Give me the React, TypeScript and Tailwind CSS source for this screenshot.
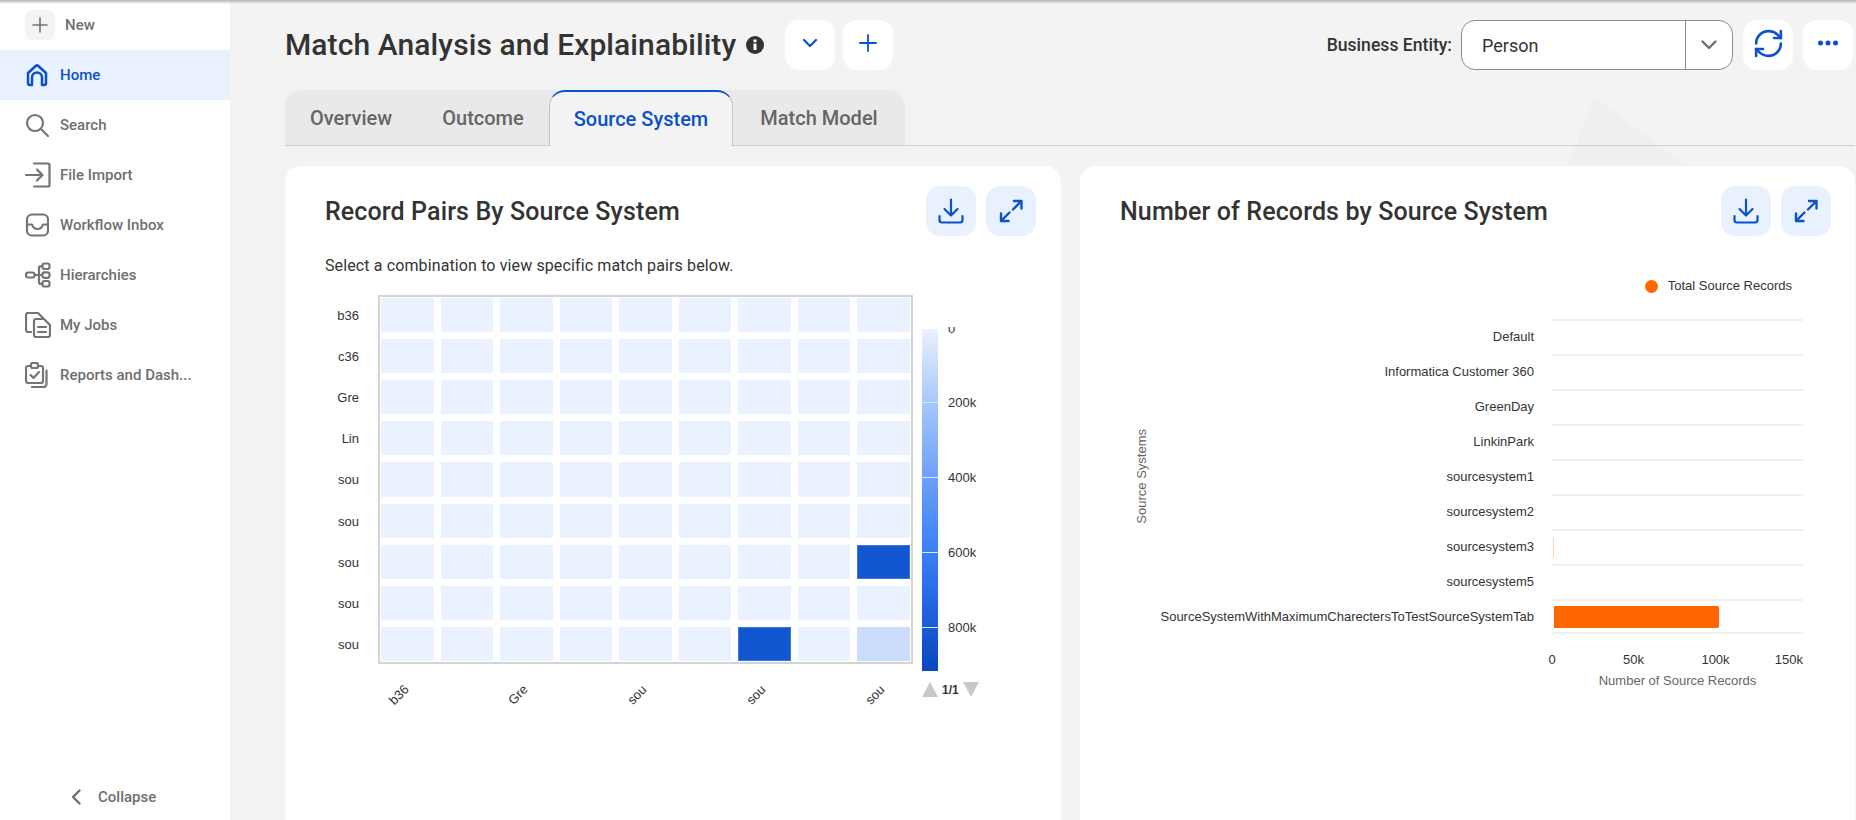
import React from "react";
import { RefreshCw } from "lucide-react";

const BLUE = "#0b51c9";

const HomeIcon = () => (
  <svg width="24" height="24" viewBox="0 0 24 24" fill="none" stroke={BLUE} strokeWidth="2.500" strokeLinejoin="round" strokeLinecap="round">
    <path d="M3 10 11 2.800a1.500 1.500 0 0 1 2 0L21 10v10a2 2 0 0 1-2 2h-2v-7.500a5 5 0 0 0-10 0V22H5a2 2 0 0 1-2-2z" />
  </svg>
);
const SearchIcon = () => (
  <svg width="24" height="24" viewBox="0 0 24 24" fill="none" stroke="#747474" strokeWidth="2.200" strokeLinecap="round">
    <circle cx="10" cy="10" r="8" />
    <path d="m16 16 7 7" />
  </svg>
);
const ImportIcon = () => (
  <svg width="26" height="26" viewBox="0 0 26 26" fill="none" stroke="#747474" strokeWidth="2.200" strokeLinecap="round" strokeLinejoin="round">
    <path d="M9 1.500h14a1.500 1.500 0 0 1 1.500 1.500v20a1.500 1.500 0 0 1-1.500 1.500H9" />
    <path d="M1 13h16.500M12 7.500 17.500 13 12 18.500" />
  </svg>
);
const InboxIcon = () => (
  <svg width="24" height="24" viewBox="0 0 24 24" fill="none" stroke="#747474" strokeWidth="2.200" strokeLinecap="round" strokeLinejoin="round">
    <rect x="2" y="1.500" width="21" height="21" rx="5" />
    <path d="M2 11.500h5c1 3 3 4.500 5.500 4.500s4.500-1.500 5.500-4.500h5" />
  </svg>
);
const HierarchyIcon = () => (
  <svg width="26" height="26" viewBox="0 0 26 26" fill="none" stroke="#747474" strokeWidth="2.200" strokeLinejoin="round">
    <rect x="1" y="10.500" width="8.500" height="5" rx="2" />
    <rect x="17.500" y="1.500" width="7" height="5.500" rx="2" />
    <rect x="17.500" y="10.300" width="7" height="5.500" rx="2" />
    <rect x="17.500" y="19" width="7" height="5.500" rx="2" />
    <path d="M9.500 13h8M14 4.300v17.500M14 4.300h3.500M14 21.800h3.500" />
  </svg>
);
const JobsIcon = () => (
  <svg width="26" height="26" viewBox="0 0 26 26" fill="none" stroke="#747474" strokeWidth="2.200" strokeLinecap="round" strokeLinejoin="round">
    <path d="M6 20H3a2 2 0 0 1-2-2V3a2 2 0 0 1 2-2h10l5 5" />
    <path d="M9 9a2 2 0 0 1 2-2h8l6 6v10a2 2 0 0 1-2 2H11a2 2 0 0 1-2-2z" />
    <path d="M13 15h8M13 20h8" />
  </svg>
);
const ReportsIcon = () => (
  <svg width="24" height="26" viewBox="0 0 24 26" fill="none" stroke="#747474" strokeWidth="2.200" strokeLinecap="round" strokeLinejoin="round">
    <path d="M6 4H3a2 2 0 0 0-2 2v13a2 2 0 0 0 2 2h13a2 2 0 0 0 2-2V6a2 2 0 0 0-2-2h-3" />
    <rect x="6" y="1" width="7" height="5" rx="1.500" />
    <path d="m5.500 13 3 3 5.500-6" />
    <path d="M21.500 8.500V22a3 3 0 0 1-3 3H7" />
  </svg>
);
const DownloadIcon = () => (
  <svg width="26" height="26" viewBox="0 0 26 26" fill="none" stroke={BLUE} strokeWidth="2.200" strokeLinecap="round" strokeLinejoin="round">
    <path d="M13 1.500V17M6.500 11l6.500 6.500 6.500-6.500" />
    <path d="M1.500 18v4a2.500 2.500 0 0 0 2.500 2.500h18a2.500 2.500 0 0 0 2.500-2.500v-4" />
  </svg>
);
const ExpandIcon = () => (
  <svg width="24" height="24" viewBox="0 0 24 24" fill="none" stroke={BLUE} strokeWidth="2.400" strokeLinecap="round" strokeLinejoin="round">
    <path d="M15 2h7.500v7.500M22.500 2 14 10.500" />
    <path d="M2 14.500V22h7.500M2 22l8.500-8.500" />
  </svg>
);

const navItems: { label: string; icon: React.ReactNode; active?: boolean }[] = [
  { label: "Home", icon: <HomeIcon />, active: true },
  { label: "Search", icon: <SearchIcon /> },
  { label: "File Import", icon: <ImportIcon /> },
  { label: "Workflow Inbox", icon: <InboxIcon /> },
  { label: "Hierarchies", icon: <HierarchyIcon /> },
  { label: "My Jobs", icon: <JobsIcon /> },
  { label: "Reports and Dash...", icon: <ReportsIcon /> },
];

function Sidebar() {
  return (
    <aside className="w-[230px] shrink-0 h-[820px] bg-white flex flex-col text-[15px] font-medium text-[#6f6f6f]">
      <div className="h-[50px] flex items-center pl-[25px]">
        <div className="w-[30px] h-[30px] rounded-[8px] bg-[#f3f3f3] flex items-center justify-center">
          <svg width="16" height="16" viewBox="0 0 16 16" fill="none" stroke="#747474" strokeWidth="1.600" strokeLinecap="round">
            <path d="M8 1v14M1 8h14" />
          </svg>
        </div>
        <span className="ml-[10px]">New</span>
      </div>
      {navItems.map((n) => (
        <div key={n.label} className={n.active ? "h-[50px] flex items-center bg-[#e9f1fe] text-[#0b51c9]" : "h-[50px] flex items-center"}>
          <div className="w-[60px] pl-[25px] flex items-center">{n.icon}</div>
          <span>{n.label}</span>
        </div>
      ))}
      <div className="mt-auto h-[46px] flex items-center pl-[71px]">
        <svg width="10" height="16" viewBox="0 0 10 16" fill="none" stroke="#6f6f6f" strokeWidth="2.400" strokeLinecap="round" strokeLinejoin="round">
          <path d="M8.500 1.500 2 8l6.500 6.500" />
        </svg>
        <span className="ml-[17px]">Collapse</span>
      </div>
    </aside>
  );
}

function IconBtn({ children, tint }: { children: React.ReactNode; tint?: boolean }) {
  return (
    <button className={tint ? "w-[50px] h-[50px] rounded-[14px] bg-[#e9f1fe] flex items-center justify-center" : "w-[50px] h-[50px] rounded-[14px] bg-white flex items-center justify-center"}>
      {children}
    </button>
  );
}

function Header() {
  return (
    <div className="mt-[20px] h-[50px] flex items-center pr-[2px]">
      <h1 className="text-[30px] leading-[36px] tracking-[0.1px] font-medium text-[#333333]">Match Analysis and Explainability</h1>
      <svg className="ml-[10px]" width="18" height="18" viewBox="0 0 18 18">
        <circle cx="9" cy="9" r="9" fill="#333333" />
        <rect x="7.500" y="7.500" width="3" height="6.500" fill="#ffffff" />
        <rect x="7.500" y="3.500" width="3" height="2.700" fill="#ffffff" />
      </svg>
      <div className="ml-[21px]">
        <IconBtn>
          <svg className="-mt-[4px]" width="16" height="10" viewBox="0 0 16 10" fill="none" stroke={BLUE} strokeWidth="2.200" strokeLinecap="round" strokeLinejoin="round">
            <path d="m2 2 6 6 6-6" />
          </svg>
        </IconBtn>
      </div>
      <div className="ml-[8px]">
        <IconBtn>
          <svg className="-mt-[4px]" width="18" height="18" viewBox="0 0 18 18" fill="none" stroke={BLUE} strokeWidth="1.800" strokeLinecap="round">
            <path d="M9 1v16M1 9h16" />
          </svg>
        </IconBtn>
      </div>
      <div className="ml-auto flex items-center">
        <span className="text-[17.6px] font-medium text-[#333333]">Business Entity:</span>
        <div className="ml-[9px] w-[272px] h-[50px] rounded-[14px] border border-[#8c8c8c] bg-white flex items-center">
          <span className="flex-1 pl-[20px] text-[18px] text-[#333333]">Person</span>
          <div className="w-[47px] h-full border-l border-[#8c8c8c] flex items-center justify-center">
            <svg width="16" height="10" viewBox="0 0 16 10" fill="none" stroke="#6f6f6f" strokeWidth="2.400" strokeLinecap="round" strokeLinejoin="round">
              <path d="m1.500 1.500 6.500 6.500 6.500-6.500" />
            </svg>
          </div>
        </div>
        <div className="ml-[10px]">
          <IconBtn>
            <RefreshCw className="-mt-[3px]" size={33} color={BLUE} strokeWidth={1.900} />
          </IconBtn>
        </div>
        <div className="ml-[10px]">
          <IconBtn>
            <svg className="-mt-[4px]" width="20" height="6" viewBox="0 0 20 6" fill={BLUE}>
              <circle cx="2.500" cy="3" r="2.500" />
              <circle cx="10" cy="3" r="2.500" />
              <circle cx="17.500" cy="3" r="2.500" />
            </svg>
          </IconBtn>
        </div>
      </div>
    </div>
  );
}

function Tabs() {
  return (
    <div className="mt-[20px] h-[56px] border-b border-[#cfcfcf] flex text-[20px] font-medium text-[#666666]">
      <div className="flex bg-[#e9e9e9] rounded-t-[16px]">
        <div className="w-[132px] h-full flex items-center justify-center">Overview</div>
        <div className="w-[132px] h-full flex items-center justify-center">Outcome</div>
        <div className="w-[184px] h-[56px] flex items-center justify-center bg-[#f3f3f3] text-[#0b51c9] rounded-t-[16px] border-t-2 border-x border-t-[#0b51c9] border-x-[#c4c4c4]">
          Source System
        </div>
        <div className="w-[172px] h-full flex items-center justify-center">Match Model</div>
      </div>
      <div className="w-[190px] bg-[#f2f2f2] rounded-tr-[16px]" />
    </div>
  );
}

function CardHead({ title }: { title: string }) {
  return (
    <div className="flex items-center justify-between h-[50px]">
      <h2 className="text-[25px] leading-[32px] tracking-[0.12px] font-medium text-[#333333] mt-[1px]">{title}</h2>
      <div className="flex gap-[10px]">
        <IconBtn tint>
          <DownloadIcon />
        </IconBtn>
        <IconBtn tint>
          <ExpandIcon />
        </IconBtn>
      </div>
    </div>
  );
}

const yLabels = ["b36", "c36", "Gre", "Lin", "sou", "sou", "sou", "sou", "sou"];
const xLabels = ["b36", "", "Gre", "", "sou", "", "sou", "", "sou"];

function cellClass(r: number, c: number) {
  if ((r === 6 && c === 8) || (r === 8 && c === 6)) return "bg-[#1257d0] border border-[#3f78dc]";
  if (r === 8 && c === 8) return "bg-[#cbdcfd]";
  return "bg-[#eaf2ff]";
}

function Heatmap() {
  const idx = [0, 1, 2, 3, 4, 5, 6, 7, 8];
  return (
    <div className="flex font-['Liberation_Sans',Arial,sans-serif] text-[13px] leading-[14px] text-[#333333] mt-[17px]">
      <div>
        <div className="flex">
          <div className="w-[34px] mr-[19px] h-[370px] pt-[4px] pb-[3px] grid grid-rows-9 gap-[7px] text-right">
            {yLabels.map((l, i) => (
              <div key={i} className="flex items-center justify-end">{l}</div>
            ))}
          </div>
          <div className="w-[535px] h-[369px] border-2 border-[#d4d4d4] p-px grid grid-cols-9 grid-rows-9 gap-[7px]">
            {idx.map((r) => idx.map((c) => <div key={r + "-" + c} className={cellClass(r, c)} />))}
          </div>
        </div>
        <div className="ml-[56px] w-[528px] mt-[23px] grid grid-cols-9 gap-[7px]">
          {xLabels.map((l, i) => (
            <div key={i} className="h-[14px] text-center -translate-x-[8px] -rotate-45">{l}</div>
          ))}
        </div>
      </div>
      <div className="ml-[9px] mt-[34px]">
        <div className="flex">
          <div className="w-[16px] h-[342px] flex flex-col bg-[linear-gradient(to_bottom,#eaf1fd_0%,#a9c8fb_21%,#6ea0f8_43%,#3a80f5_65%,#1b5bd5_87%,#0a47bd_100%)]">
            <div className="h-[74px] border-b border-[#d9e6fd]" />
            <div className="h-[75px] border-b border-[#d9e6fd]" />
            <div className="h-[75px] border-b border-[#d9e6fd]" />
            <div className="h-[75px] border-b border-[#d9e6fd]" />
          </div>
          <div className="ml-[10px] -mt-[2px] flex flex-col">
            <div className="h-[7px] overflow-hidden">
              <div className="-mt-[5px]">0</div>
            </div>
            <div className="mt-[62px] flex flex-col gap-[61px]">
              <span>200k</span>
              <span>400k</span>
              <span>600k</span>
              <span>800k</span>
            </div>
          </div>
        </div>
        <div className="mt-[11px] flex items-center">
          <svg width="16" height="15" viewBox="0 0 16 15" fill="#c8c8c8">
            <path d="M8 0 16 15H0z" />
          </svg>
          <span className="ml-[4px] w-[21px] text-[12px] font-bold text-[#333333]">1/1</span>
          <svg width="16" height="15" viewBox="0 0 16 15" fill="#c8c8c8">
            <path d="M0 0h16L8 15z" />
          </svg>
        </div>
      </div>
    </div>
  );
}

const sources = ["Default", "Informatica Customer 360", "GreenDay", "LinkinPark", "sourcesystem1", "sourcesystem2", "sourcesystem3", "sourcesystem5", "SourceSystemWithMaximumCharectersToTestSourceSystemTab"];

function BarChart() {
  return (
    <div className="font-['Liberation_Sans',Arial,sans-serif] text-[13px] leading-[14px] text-[#333333]">
      <div className="mt-[43px] h-[14px] flex justify-end items-center pr-[39px]">
        <span className="w-[13px] h-[13px] rounded-full bg-[#ff6600]" />
        <span className="ml-[10px]">Total Source Records</span>
      </div>
      <div className="mt-[26px] ml-[15px] flex items-center">
        <div className="w-[13px] text-[#666666] [writing-mode:vertical-rl] rotate-180">Source Systems</div>
        <div className="flex-1 pr-[28px]">
          {sources.map((s, i) => (
            <div key={s} className="flex h-[35px]">
              <div className="flex-1 pr-[18px] flex items-center justify-end whitespace-nowrap">{s}</div>
              <div className={i === 8 ? "w-[251px] border-y-2 border-[#f0f0f0] flex items-center pl-[2px]" : "w-[251px] border-t-2 border-[#f0f0f0] flex items-center pl-[1px]"}>
                {i === 6 && <div className="w-[1px] h-[19px] bg-[#ffd0b0]" />}
                {i === 8 && <div className="w-[165px] h-[22px] bg-[#ff6600] rounded-r-[2px]" />}
              </div>
            </div>
          ))}
        </div>
      </div>
      <div className="ml-[432px] mt-[19px] w-[251px] flex">
        <span className="w-[83.5px] -translate-x-[3.5px]">0</span>
        <span className="w-[83.5px] -translate-x-[11px]">50k</span>
        <span className="w-[60px] -translate-x-[14.5px]">100k</span>
        <span className="flex-1 text-right">150k</span>
      </div>
      <div className="ml-[432px] w-[251px] mt-[7px] text-center text-[#666666]">Number of Source Records</div>
    </div>
  );
}

export default function App() {
  return (
    <div className="relative w-full h-[820px] overflow-hidden flex bg-[#f3f3f3] font-[Roboto,sans-serif]">
      <div className="absolute left-[1568px] top-[97px] w-[118px] h-[69px] bg-[#efefef] [clip-path:polygon(22%_0,100%_100%,0_100%)]" />
      <Sidebar />
      <main className="relative flex-1 pl-[55px] pr-[1px] h-[820px] overflow-hidden">
        <Header />
        <Tabs />
        <div className="mt-[20px] grid grid-cols-[776px_775px] gap-[19px]">
          <section className="h-[700px] bg-white rounded-[16px] pl-[40px] pr-[25px] pt-[20px]">
            <CardHead title="Record Pairs By Source System" />
            <p className="mt-[18px] text-[16px] leading-[24px] tracking-[0.12px] text-[#333333]">Select a combination to view specific match pairs below.</p>
            <Heatmap />
          </section>
          <section className="h-[700px] bg-white rounded-[16px] pl-[40px] pr-[24px] pt-[20px]">
            <CardHead title="Number of Records by Source System" />
            <BarChart />
          </section>
        </div>
      </main>
      <div className="absolute left-0 top-0 w-full h-[4px] bg-[linear-gradient(to_bottom,#b4b4b4,#f3f3f300)]" />
    </div>
  );
}
